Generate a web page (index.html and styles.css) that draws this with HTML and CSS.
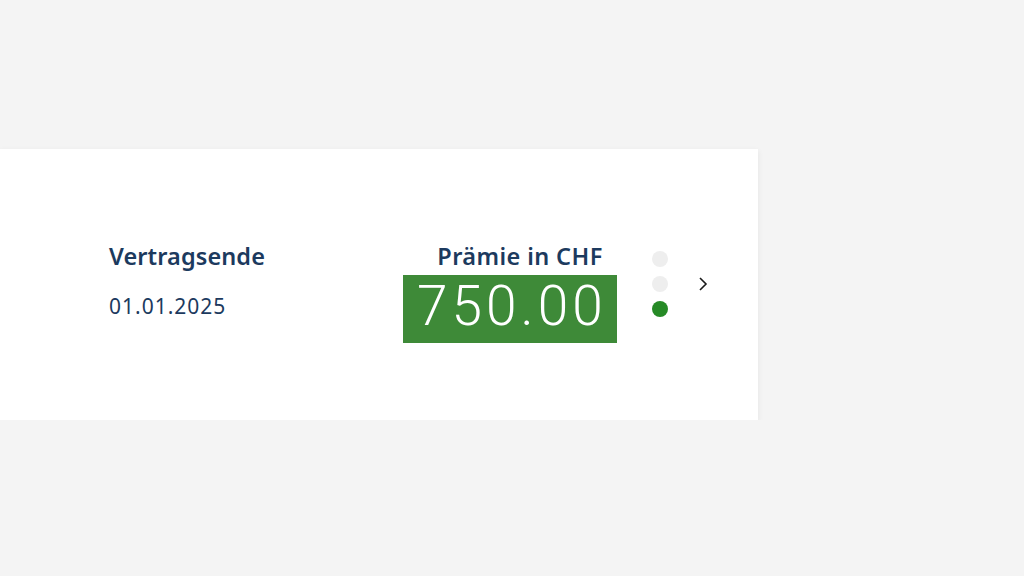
FILE: index.html
```html
<!DOCTYPE html>
<html lang="de">
<head>
<meta charset="utf-8">
<link rel="stylesheet" href="styles.css">
</head>
<body>
<div class="card">
  <div class="col col-left">
    <div class="label">Vertragsende</div>
    <div class="value">01.01.2025</div>
  </div>
  <div class="col col-right">
    <div class="label label-right">Prämie in CHF</div>
    <div class="amount">750.00</div>
  </div>
  <div class="dots">
    <span class="dot"></span>
    <span class="dot"></span>
    <span class="dot dot-active"></span>
  </div>
  <div class="chev">
    <svg width="12" height="16" viewBox="0 0 12 16"><path d="M3 2 L9 8 L3 14" fill="none" stroke="#1a1a1a" stroke-width="1.6"/></svg>
  </div>
</div>
</body>
</html>
```
FILE: styles.css
```css
html, body {
  margin: 0;
  padding: 0;
  background: #f4f4f4;
  font-family: "Noto Sans", "Open Sans", sans-serif;
}
.card {
  margin-top: 149px;
  width: 758px;
  height: 271px;
  box-sizing: border-box;
  background: #ffffff;
  box-shadow: 0 2px 6px rgba(0,0,0,0.07);
  display: flex;
  align-items: flex-start;
  padding-top: 97px;
  padding-left: 109px;
}
.col {
  display: flex;
  flex-direction: column;
}
.col-left {
  width: 294px;
}
.label {
  font-size: 23.5px;
  line-height: 20px;
  font-weight: 600;
  color: #1c3a5e;
  letter-spacing: 0.1px;
}
.value {
  margin-top: 27px;
  font-size: 21px;
  line-height: 26px;
  color: #1c3a5e;
  letter-spacing: 1px;
}
.col-right {
  align-items: flex-end;
}
.label-right {
  padding-right: 14px;
  letter-spacing: 0.4px;
}
.amount {
  margin-top: 9px;
  background: #3e8a38;
  color: #ffffff;
  font-family: Roboto, "Noto Sans", sans-serif;
  font-size: 55px;
  font-weight: 300;
  line-height: 62px;
  height: 68px;
  padding: 0 10px 0 14px;
  letter-spacing: 4px;
}
.dots {
  display: flex;
  flex-direction: column;
  gap: 9px;
  margin-left: 35px;
  margin-top: 5px;
}
.dot {
  width: 16px;
  height: 16px;
  border-radius: 50%;
  background: #eeeeee;
}
.dot-active {
  background: #268a26;
}
.chev {
  margin-left: 29px;
  margin-top: 30px;
  display: flex;
}
```
